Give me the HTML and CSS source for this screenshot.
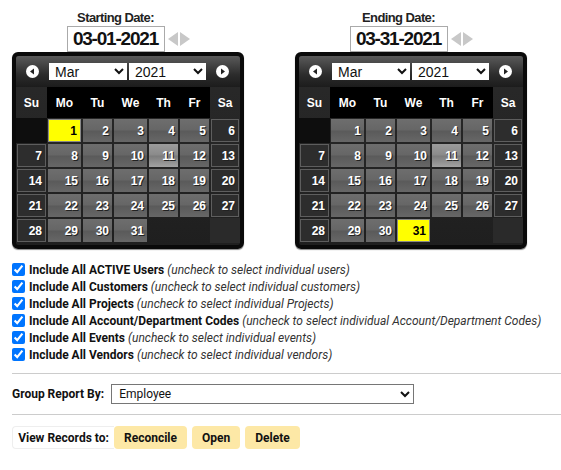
FILE: index.html
```html
<!DOCTYPE html>
<html lang="en">
<head>
  <meta charset="UTF-8">
  <title>Time Report</title>
  <link rel="stylesheet" href="styles.css">
</head>
<body>

  <div class="page">

    <div class="dates">
      <div class="date-col">
        <div class="date-row">
          <div class="date-field">
            <div class="date-title">Starting Date:</div>
            <span class="date-box">03-01-2021</span>
          </div>
          <span class="steppers">
            <svg width="10" height="14" viewBox="0 0 10 14"><polygon points="10,0 10,14 0,7" fill="#c8c8c8"/></svg>
            <svg width="10" height="14" viewBox="0 0 10 14"><polygon points="0,0 0,14 10,7" fill="#c8c8c8"/></svg>
          </span>
        </div>
        <div class="cal" id="calStart" data-selected="1"></div>
      </div>

      <div class="date-col">
        <div class="date-row">
          <div class="date-field">
            <div class="date-title">Ending Date:</div>
            <span class="date-box">03-31-2021</span>
          </div>
          <span class="steppers">
            <svg width="10" height="14" viewBox="0 0 10 14"><polygon points="10,0 10,14 0,7" fill="#c8c8c8"/></svg>
            <svg width="10" height="14" viewBox="0 0 10 14"><polygon points="0,0 0,14 10,7" fill="#c8c8c8"/></svg>
          </span>
        </div>
        <div class="cal" id="calEnd" data-selected="31"></div>
      </div>
    </div>

    <div class="options">
      <label class="opt"><input type="checkbox" checked> <b>Include All ACTIVE Users</b> <i>(uncheck to select individual users)</i></label>
      <label class="opt"><input type="checkbox" checked> <b>Include All Customers</b> <i>(uncheck to select individual customers)</i></label>
      <label class="opt"><input type="checkbox" checked> <b>Include All Projects</b> <i>(uncheck to select individual Projects)</i></label>
      <label class="opt"><input type="checkbox" checked> <b>Include All Account/Department Codes</b> <i>(uncheck to select individual Account/Department Codes)</i></label>
      <label class="opt"><input type="checkbox" checked> <b>Include All Events</b> <i>(uncheck to select individual events)</i></label>
      <label class="opt"><input type="checkbox" checked> <b>Include All Vendors</b> <i>(uncheck to select individual vendors)</i></label>
    </div>

    <hr class="rule">

    <div class="group-row">
      <span class="group-label">Group Report By:</span>
      <select class="group-select">
        <option>Employee</option>
        <option>Customer</option>
        <option>Project</option>
      </select>
    </div>

    <hr class="rule">

    <div class="view-row">
      <span class="view-label">View Records to:</span>
      <button class="btn">Reconcile</button>
      <button class="btn">Open</button>
      <button class="btn">Delete</button>
    </div>

  </div>

  <script>
    const dayNames = ['Su', 'Mo', 'Tu', 'We', 'Th', 'Fr', 'Sa'];
    const months = ['Jan', 'Feb', 'Mar', 'Apr', 'May', 'Jun', 'Jul', 'Aug', 'Sep', 'Oct', 'Nov', 'Dec'];

    function circleBtn(dir) {
      const pts = dir === 'prev' ? '8,3.5 8,9.5 4,6.5' : '5,3.5 5,9.5 9,6.5';
      return `<span class="cal-nav"><svg width="13" height="13" viewBox="0 0 13 13">
        <circle cx="6.5" cy="6.5" r="6.5" fill="#fff"/>
        <polygon points="${pts}" fill="#222"/></svg></span>`;
    }

    function buildCalendar(cal) {
      const selected = parseInt(cal.dataset.selected, 10);
      let html = '<div class="cal-head">' + circleBtn('prev');
      html += '<select class="cal-select">' + months.map(m =>
        `<option${m === 'Mar' ? ' selected' : ''}>${m}</option>`).join('') + '</select>';
      html += '<select class="cal-select"><option>2020</option><option selected>2021</option><option>2022</option></select>';
      html += circleBtn('next') + '</div>';

      html += '<div class="cal-grid">';
      dayNames.forEach((d, i) => {
        const wk = (i === 0 || i === 6) ? ' weekend' : '';
        html += `<div class="dname${wk}">${d}</div>`;
      });

      // March 2021 starts on a Monday
      const first = 1;
      for (let i = 0; i < 35; i++) {
        const day = i - first + 1;
        const col = i % 7;
        const wk = (col === 0 || col === 6);
        if (day < 1) {
          html += '<div class="day blank-first"></div>';
        } else if (day > 31) {
          html += `<div class="day blank${wk ? ' blank-wk' : ''}"></div>`;
        } else {
          let cls = wk ? 'day wk' : 'day';
          if (day === 11) cls += ' today';
          if (day === selected) cls += ' selected';
          html += `<div class="${cls}">${day}</div>`;
        }
      }
      html += '</div>';
      cal.innerHTML = html;
    }

    document.querySelectorAll('.cal').forEach(buildCalendar);
  </script>

</body>
</html>
```

FILE: styles.css
```css
body {
  margin: 0;
  font-family: "Liberation Sans", Arial, sans-serif;
  color: #111;
  background: #fff;
}

.page {
  padding: 10px 0 0 12px;
}

.dates {
  display: flex;
  gap: 51px;
}

.date-col {
  width: 232px;
  display: flex;
  flex-direction: column;
  align-items: center;
}

.date-row {
  display: flex;
  align-items: flex-end;
}

.date-field {
  display: flex;
  flex-direction: column;
  align-items: center;
}

.date-title {
  font-size: 13px;
  font-weight: bold;
  letter-spacing: -0.6px;
  line-height: 15px;
  margin-bottom: 1px;
  color: #222;
}

.date-box {
  width: 96px;
  height: 24px;
  border: 1px solid #aaa;
  font-size: 19px;
  font-weight: bold;
  letter-spacing: -1.2px;
  line-height: 24px;
  text-align: center;
  color: #111;
}

.steppers {
  display: flex;
  gap: 2px;
  margin: 0 0 6px 3px;
}

/* calendar */

.cal {
  width: 224px;
  border: 4px solid #0a0a0a;
  border-radius: 6px;
  background: linear-gradient(#2a2a2a, #1f1f1f);
  padding-bottom: 2px;
  box-shadow: 0 1px 1px #888;
}

.cal-head {
  height: 31px;
  display: flex;
  align-items: center;
  background: linear-gradient(#5a5a5a, #2c2c2c 60%, #1c1c1c);
  border-radius: 3px 3px 0 0;
}

.cal-nav {
  width: 33px;
  display: flex;
  justify-content: center;
}

.cal-nav svg {
  display: block;
}

.cal-select {
  width: 78px;
  height: 17px;
  margin-right: 2px;
  padding: 0 2px;
  font-family: "Liberation Sans", Arial, sans-serif;
  font-size: 14px;
  border: 0;
  border-radius: 0;
  background: #fff;
  color: #111;
}

.cal-select + .cal-select {
  width: 77px;
  margin-right: 0;
}

.cal-grid {
  display: grid;
  grid-template-columns: 31px 35px 31px 35px 31px 31px 30px;
  grid-auto-rows: 25px;
  grid-template-rows: 31px;
  font-size: 12px;
  font-weight: bold;
  color: #fff;
}

.dname {
  background: #000;
  display: flex;
  align-items: center;
  justify-content: center;
}

.dname.weekend {
  background: transparent;
}

.day {
  margin: 1px;
  display: flex;
  align-items: center;
  justify-content: flex-end;
  padding-right: 3px;
  background: linear-gradient(#6e6e6e, #666 48%, #5a5a5a 52%, #676767);
  text-shadow: 1px 1px 0 #222;
}

.day.wk {
  background: #2d2d2d;
  border: 1px solid #5e5e5e;
}

.day.today {
  background: linear-gradient(#9c9c9c, #8a8a8a 48%, #7c7c7c 52%, #a2a2a2);
}

.day.selected {
  background: #ffff00;
  border: 1px solid #888;
  color: #000;
  text-shadow: none;
}

.blank-first {
  margin: 0;
  background: #0e0e0e;
}

.blank {
  background: transparent;
}

.blank-wk {
  margin: 0;
  background: #2a2a2a;
}

/* options */

.options {
  margin-top: 12px;
  font-family: Roboto, "Liberation Sans", sans-serif;
  font-size: 12px;
  color: #111;
}

.opt {
  display: flex;
  align-items: center;
  height: 17px;
  white-space: nowrap;
}

.opt input {
  width: 13px;
  height: 13px;
  margin: 0 4px 0 0;
}

.opt b {
  font-weight: bold;
  margin-right: 3px;
}

.opt i {
  color: #333;
}

.rule {
  border: 0;
  border-top: 1px solid #ccc;
  margin: 10px 0;
}

.group-row {
  display: flex;
  align-items: center;
  font-family: Roboto, "Liberation Sans", sans-serif;
  font-size: 12px;
}

.group-label {
  font-weight: bold;
  margin-right: 7px;
}

.group-select {
  width: 303px;
  height: 20px;
  border: 1px solid #767676;
  border-radius: 0;
  background: #fff;
  font-family: Roboto, "Liberation Sans", sans-serif;
  font-size: 12px;
  padding: 0 3px;
  color: #111;
}

.view-row {
  display: flex;
  align-items: stretch;
  height: 23px;
  margin-top: 11px;
  font-family: Roboto, "Liberation Sans", sans-serif;
  font-size: 12px;
  font-weight: bold;
}

.view-label {
  border: 1px solid #eee;
  border-right: 0;
  border-radius: 4px 0 0 4px;
  display: flex;
  align-items: center;
  justify-content: center;
  box-sizing: border-box;
  width: 102px;
}

.btn {
  border: 0;
  border-radius: 4px;
  background: #fde8a6;
  font-family: inherit;
  font-size: 12px;
  font-weight: bold;
  color: #111;
  padding: 0 10px;
  margin-right: 5px;
}
```
